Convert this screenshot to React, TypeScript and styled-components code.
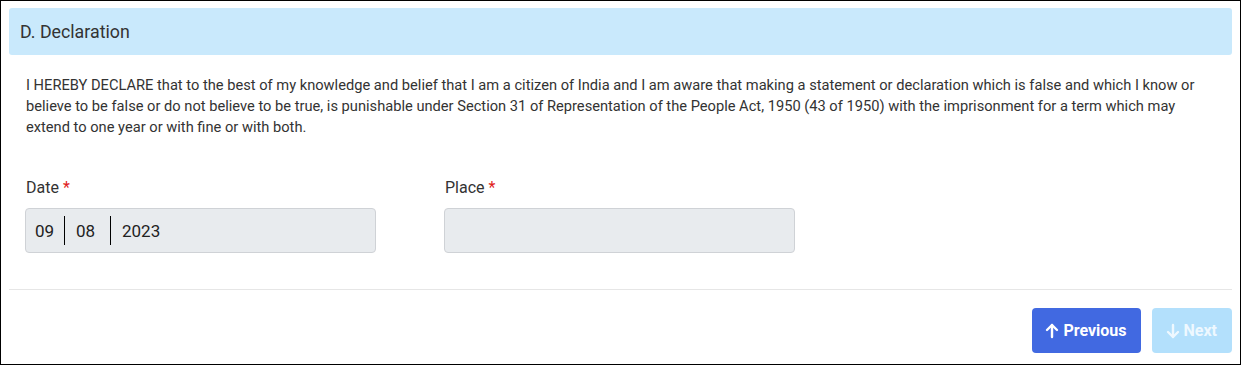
import React from "react";
import styled, { createGlobalStyle } from "styled-components";

const Global = createGlobalStyle`
  html, body { margin: 0; padding: 0; background: #fff; }
  body { font-family: Roboto, "Liberation Sans", Arial, sans-serif; }
  * { box-sizing: border-box; }
`;

const Card = styled.div`
  width: 1241px;
  height: 365px;
  border: 1px solid #000;
  padding: 7px 8px 8px 8px;
  display: flex;
  flex-direction: column;
`;

const Header = styled.div`
  height: 47px;
  background: #c9e9fc;
  border-radius: 3px;
  padding: 0 11px;
  display: flex;
  align-items: center;
  font-size: 17.8px;
  color: #333;
`;

const Body = styled.div`
  padding: 20px 12px 0 17px;
  display: flex;
  flex-direction: column;
`;

const Para = styled.p`
  margin: 0;
  font-size: 14.67px;
  line-height: 21px;
  color: #333;
`;

const Fields = styled.div`
  display: flex;
  gap: 68px;
  margin-top: 40px;
  margin-left: -1px;
`;

const Field = styled.div`
  width: 351px;
  display: flex;
  flex-direction: column;
`;

const Label = styled.div`
  font-size: 16px;
  font-weight: 400;
  color: #333;
  line-height: 20px;
  margin-left: 1px;
`;

const Req = styled.span`
  color: #e02020;
  margin-left: 4px;
`;

const Input = styled.div`
  margin-top: 10px;
  height: 45px;
  background: #e8ebee;
  border: 1px solid #cfd2d6;
  border-radius: 4px;
  display: flex;
  align-items: center;
  padding-left: 9px;
  font-size: 17px;
  color: #222;
`;

const Seg = styled.span<{ $w?: number }>`
  display: flex;
  align-items: center;
  height: 29px;
  width: ${(p) => (p.$w ? `${p.$w}px` : "auto")};
  margin-right: ${(p) => (p.$w ? "11px" : "0")};
  border-right: ${(p) => (p.$w ? "1px solid #000" : "none")};
`;

const Divider = styled.div`
  height: 1px;
  background: #e6e6e6;
  margin-top: 36px;
`;

const Footer = styled.div`
  display: flex;
  justify-content: flex-end;
  gap: 11px;
  margin-top: 18px;
`;

const Btn = styled.button<{ $disabled?: boolean }>`
  height: 45px;
  border: none;
  border-radius: 4px;
  padding: ${(p) => (p.$disabled ? "0 15px 0 14px" : "0 14px 0 13px")};
  background: ${(p) => (p.$disabled ? "#b3e0fc" : "#4169e1")};
  color: ${(p) => (p.$disabled ? "#eef8ff" : "#fff")};
  font-family: Roboto, "Liberation Sans", Arial, sans-serif;
  font-weight: 700;
  font-size: 16px;
  display: flex;
  align-items: center;
  gap: 4px;
  cursor: pointer;
`;

const Arrow = ({ down }: { down?: boolean }) => (
  <svg width="14" height="16" viewBox="0 0 14 16" fill="none" stroke="currentColor" strokeWidth="2.4" strokeLinecap="round" strokeLinejoin="round">
    {down ? (
      <>
        <path d="M7 2v12" />
        <path d="M2 9l5 5 5-5" />
      </>
    ) : (
      <>
        <path d="M7 14V2" />
        <path d="M2 7l5-5 5 5" />
      </>
    )}
  </svg>
);

export default function App() {
  return (
    <>
      <Global />
      <Card>
        <Header>D. Declaration</Header>
        <Body>
          <Para>
            I HEREBY DECLARE that to the best of my knowledge and belief that I am a citizen of India and I am aware that making a statement or declaration which is false and which I know or believe to be false or do not believe to be true, is punishable under Section 31 of Representation of the People Act, 1950 (43 of 1950) with the imprisonment for a term which may extend to one year or with fine or with both.
          </Para>
          <Fields>
            <Field>
              <Label>
                Date<Req>*</Req>
              </Label>
              <Input>
                <Seg $w={30}>09</Seg>
                <Seg $w={35}>08</Seg>
                <Seg>2023</Seg>
              </Input>
            </Field>
            <Field>
              <Label>
                Place<Req>*</Req>
              </Label>
              <Input />
            </Field>
          </Fields>
        </Body>
        <Divider />
        <Footer>
          <Btn>
            <Arrow />
            Previous
          </Btn>
          <Btn $disabled>
            <Arrow down />
            Next
          </Btn>
        </Footer>
      </Card>
    </>
  );
}
